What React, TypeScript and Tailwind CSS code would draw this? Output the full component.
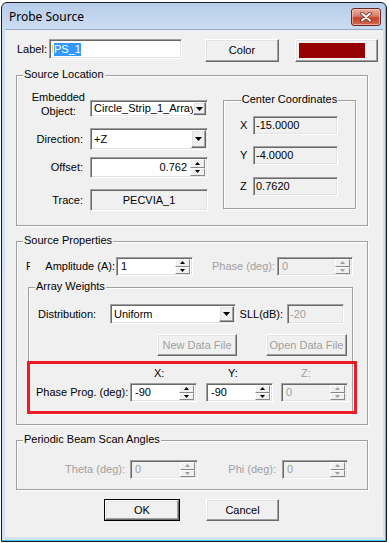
import React from "react";

const sunken =
  "border border-t-[#a0a0a0] border-l-[#a0a0a0] border-r-white border-b-white shadow-[inset_1px_1px_0_#696969,inset_-1px_-1px_0_#e3e3e3] p-[1px]";
const raised =
  "border border-t-white border-l-white border-r-[#696969] border-b-[#696969] shadow-[inset_-1px_-1px_0_#a0a0a0,inset_1px_1px_0_#e3e3e3] bg-[#f0f0f0]";
const etched =
  "relative border border-[#a0a0a0] shadow-[inset_1px_1px_0_#ffffff,1px_1px_0_#ffffff]";
const gray = "text-[#a0a0a0]";

function GroupTitle({ children }: { children: React.ReactNode }) {
  return (
    <span className="absolute left-[6px] top-[-8px] px-[1px] bg-[#f0f0f0] leading-[13px] whitespace-nowrap">
      {children}
    </span>
  );
}

function Tri({ dir, disabled, big }: { dir: "up" | "down"; disabled?: boolean; big?: boolean }) {
  const c = disabled ? "#a0a0a0" : "#000";
  if (big) {
    return (
      <svg width="7" height="4" viewBox="0 0 7 4">
        <path d="M0 0 H7 L3.5 4 Z" fill={c} />
      </svg>
    );
  }
  return (
    <svg width="5" height="3" viewBox="0 0 5 3">
      {dir === "up" ? <path d="M2.5 0 L5 3 H0 Z" fill={c} /> : <path d="M0 0 H5 L2.5 3 Z" fill={c} />}
    </svg>
  );
}

function SpinBtn({ dir, disabled }: { dir: "up" | "down"; disabled?: boolean }) {
  return (
    <div className="flex-1 flex items-center justify-center border border-t-white border-l-white border-r-[#888] border-b-[#888] bg-[#f0f0f0]">
      <Tri dir={dir} disabled={disabled} />
    </div>
  );
}

function Spin({
  cls,
  value,
  disabled,
  right,
}: {
  cls: string;
  value: string;
  disabled?: boolean;
  right?: boolean;
}) {
  return (
    <div className={`${cls} ${sunken} ${disabled ? "bg-[#f0f0f0]" : "bg-white"} flex`}>
      <div
        className={`flex-1 flex items-center ${right ? "justify-end pr-[3px]" : "pl-[3px]"} ${
          disabled ? gray : "text-black"
        }`}
      >
        {value}
      </div>
      <div className="flex flex-col w-[15px] mr-[1px]">
        <SpinBtn dir="up" disabled={disabled} />
        <SpinBtn dir="down" disabled={disabled} />
      </div>
    </div>
  );
}

function Combo({ cls, value, btn }: { cls: string; value: string; btn: string }) {
  return (
    <div className={`${cls} ${sunken} bg-white flex`}>
      <div className="flex-1 flex items-center pl-[2px] overflow-hidden whitespace-nowrap">{value}</div>
      <div className={`${btn} h-full flex items-center justify-center ${raised}`}>
        <Tri dir="down" big />
      </div>
    </div>
  );
}

function Field({
  cls,
  value,
  disabled,
  center,
}: {
  cls: string;
  value: string;
  disabled?: boolean;
  center?: boolean;
}) {
  return (
    <div
      className={`${cls} ${sunken} bg-[#f0f0f0] flex items-center ${center ? "justify-center" : "pl-[2px]"} ${
        disabled ? gray : "text-black"
      }`}
    >
      {value}
    </div>
  );
}

function Btn({ cls, label, disabled }: { cls: string; label: string; disabled?: boolean }) {
  return (
    <div className={`${cls} ${raised} flex items-center justify-center ${disabled ? gray : "text-black"}`}>
      {label}
    </div>
  );
}

export default function App() {
  return (
    <div className="w-[389px] h-[543px] bg-white pl-[1px] pt-[2px] font-['Liberation_Sans',Arial,sans-serif] text-[11px] leading-[13px] text-black">
      <div className="w-[386px] h-[540px] border border-[#1a1a1a] rounded-t-[6px] bg-[linear-gradient(#b7cdea,#cfdff3_30px,#d3e3f4)] shadow-[inset_-1px_-1px_0_#3cc6ee] flex flex-col">
        {/* title bar */}
        <div className="h-[27px] flex items-center justify-between pl-[7px] pr-[5px]">
          <span className="font-['Noto_Sans',sans-serif] text-[12px] text-black">Probe Source</span>
          <div className="w-[30px] h-[18px] rounded-[3px] border border-[#6e2a20] bg-[linear-gradient(#eab2a4,#d77a66_45%,#c4432c_55%,#cf6a4f)] shadow-[inset_0_0_0_1px_rgba(255,210,200,0.6)] flex items-center justify-center">
            <svg width="12" height="10" viewBox="0 0 12 10">
              <path d="M2 1.5 L10 8.5 M10 1.5 L2 8.5" stroke="#6a2a20" strokeWidth="3.6" strokeLinecap="round" />
              <path d="M2 1.5 L10 8.5 M10 1.5 L2 8.5" stroke="#ffffff" strokeWidth="2" strokeLinecap="round" />
            </svg>
          </div>
        </div>

        {/* content */}
        <div className="ml-[3px] w-[378px] h-[507px] bg-[#f0f0f0] shadow-[0_-1px_0_#97abc6] flex flex-col">
          {/* label row */}
          <div className="mt-[9px] flex items-start pl-[12px]">
            <div className="w-[32px] h-[20px] flex items-center">Label:</div>
            <div className={`w-[133px] h-[20px] ${sunken} bg-white flex items-center pl-[2px]`}>
              <span className="w-[1px] h-[8px] bg-[#f2c27a]" />
              <span className="ml-[1px] bg-[#3399ff] text-white h-[13px] leading-[13px]">PS_1</span>
            </div>
            <Btn cls="ml-[23px] w-[74px] h-[23px]" label="Color" />
            <div className={`ml-[16px] w-[83px] h-[23px] ${raised} flex items-center pl-[3px]`}>
              <div className="w-[66px] h-[15px] bg-[#960000]" />
            </div>
          </div>

          {/* Source Location */}
          <div className={`ml-[11px] mt-[13px] w-[352px] h-[151px] ${etched}`}>
            <GroupTitle>Source Location</GroupTitle>
            <div className="flex items-start">
              <div className="mt-[14px] w-[191px] flex flex-col">
                <div className="h-[28px] flex items-start">
                  <div className="w-[73px] flex justify-end pr-[5px]">
                    <div className="text-center leading-[14px]">
                      Embedded
                      <br />
                      Object:
                    </div>
                  </div>
                  <Combo cls="mt-[10px] w-[118px] h-[17px]" value="Circle_Strip_1_Array" btn="w-[13px]" />
                </div>
                <div className="mt-[10px] h-[22px] flex items-center">
                  <div className="w-[73px] text-right pr-[7px]">Direction:</div>
                  <Combo cls="w-[118px] h-[22px]" value="+Z" btn="w-[15px]" />
                </div>
                <div className="mt-[7px] h-[21px] flex items-center">
                  <div className="w-[73px] text-right pr-[7px]">Offset:</div>
                  <Spin cls="w-[118px] h-[21px]" value="0.762" right />
                </div>
                <div className="mt-[11px] h-[22px] flex items-center">
                  <div className="w-[73px] text-right pr-[7px]">Trace:</div>
                  <Field cls="w-[118px] h-[22px]" value="PECVIA_1" center />
                </div>
              </div>

              <div className={`ml-[15px] mt-[24px] w-[133px] h-[109px] ${etched}`}>
                <div className="absolute left-0 right-0 top-[-8px] flex justify-center">
                  <span className="px-[1px] bg-[#f0f0f0] leading-[13px]">Center Coordinates</span>
                </div>
                <div className="pt-[15px] flex flex-col">
                  <div className="flex items-center">
                    <div className="w-[29px] pl-[16px]">X</div>
                    <Field cls="w-[85px] h-[19px]" value="-15.0000" />
                  </div>
                  <div className="mt-[11px] flex items-center">
                    <div className="w-[29px] pl-[16px]">Y</div>
                    <Field cls="w-[85px] h-[19px]" value="-4.0000" />
                  </div>
                  <div className="mt-[12px] flex items-center">
                    <div className="w-[29px] pl-[16px]">Z</div>
                    <Field cls="w-[85px] h-[19px]" value="0.7620" />
                  </div>
                </div>
              </div>
            </div>
          </div>

          {/* Source Properties */}
          <div className={`ml-[11px] mt-[15px] w-[352px] h-[184px] ${etched}`}>
            <GroupTitle>Source Properties</GroupTitle>
            <div className="mt-[15px] h-[19px] flex items-center pl-[9px]">
              <div className="w-[4px] overflow-hidden">F</div>
              <div className="w-[86px] text-right pr-[1px] whitespace-nowrap">Amplitude (A):</div>
              <Spin cls="w-[77px] h-[19px]" value="1" />
              <div className={`w-[84px] text-right pr-[2px] ${gray}`}>Phase (deg):</div>
              <Spin cls="w-[76px] h-[19px]" value="0" disabled />
            </div>

            <div className={`ml-[11px] mt-[11px] w-[325px] h-[127px] ${etched}`}>
              <GroupTitle>Array Weights</GroupTitle>
              <div className="mt-[16px] h-[20px] flex items-center pl-[9px]">
                <div className="w-[72px]">Distribution:</div>
                <Combo cls="w-[126px] h-[20px]" value="Uniform" btn="w-[15px]" />
                <div className="w-[51px] text-right pr-[4px]">SLL(dB):</div>
                <Field cls="w-[57px] h-[20px]" value="-20" disabled />
              </div>
              <div className="mt-[10px] flex pl-[128px]">
                <Btn cls="w-[80px] h-[22px]" label="New Data File" disabled />
                <Btn cls="ml-[29px] w-[81px] h-[22px]" label="Open Data File" disabled />
              </div>
              <div className="mt-[11px] h-[12px] flex pl-[101px] leading-[12px]">
                <div className="w-[67px] pl-[24px]">X:</div>
                <div className="ml-[9px] w-[67px] pl-[22px]">Y:</div>
                <div className={`ml-[8px] w-[67px] pl-[20px] ${gray}`}>Z:</div>
              </div>
              <div className="mt-[4px] h-[19px] flex items-center pl-[7px]">
                <div className="w-[94px] whitespace-nowrap">Phase Prog. (deg):</div>
                <Spin cls="w-[67px] h-[19px]" value="-90" />
                <Spin cls="ml-[9px] w-[67px] h-[19px]" value="-90" />
                <Spin cls="ml-[8px] w-[67px] h-[19px]" value="0" disabled />
              </div>
              <div className="absolute left-[-2px] top-[73px] w-[330px] h-[53px] border-[3px] border-[#ed1c24]" />
            </div>
          </div>

          {/* Periodic Beam Scan Angles */}
          <div className={`ml-[11px] mt-[15px] w-[352px] h-[50px] ${etched}`}>
            <GroupTitle>Periodic Beam Scan Angles</GroupTitle>
            <div className="mt-[19px] h-[19px] flex items-center">
              <div className={`w-[113px] text-right pr-[5px] ${gray}`}>Theta (deg):</div>
              <Spin cls="w-[68px] h-[19px]" value="0" disabled />
              <div className={`w-[84px] text-right pr-[6px] ${gray}`}>Phi (deg):</div>
              <Spin cls="w-[66px] h-[19px]" value="0" disabled />
            </div>
          </div>

          {/* buttons */}
          <div className="mt-[9px] flex pl-[99px]">
            <div className="w-[76px] h-[22px] border border-black flex">
              <Btn cls="flex-1 h-full" label="OK" />
            </div>
            <Btn cls="ml-[26px] w-[73px] h-[22px]" label="Cancel" />
          </div>
        </div>
      </div>
    </div>
  );
}
